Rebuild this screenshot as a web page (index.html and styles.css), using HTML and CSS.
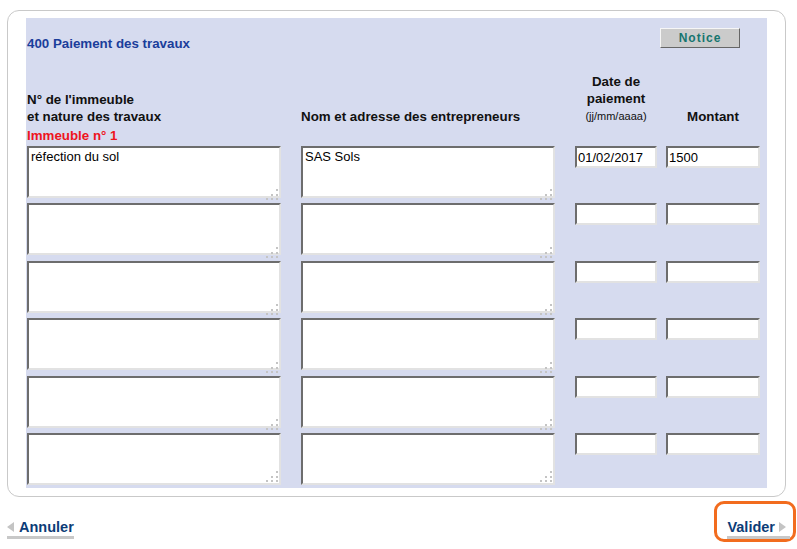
FILE: index.html
```html
<!DOCTYPE html>
<html lang="fr">
<head>
  <meta charset="UTF-8">
  <title>Paiement des travaux</title>
  <link rel="stylesheet" href="styles.css">
</head>
<body>
  <div class="panel">
    <div class="sheet">
      <div class="topbar">
        <h2 class="title">400 Paiement des travaux</h2>
        <button class="notice">Notice</button>
      </div>

      <div class="grid">
        <div class="head c1">N° de l'immeuble<br>et nature des travaux</div>
        <div class="head c2">Nom et adresse des entrepreneurs</div>
        <div class="head c3 center">Date de<br>paiement<br><small>(jj/mm/aaaa)</small></div>
        <div class="head c4 center">Montant</div>

        <div class="building">Immeuble n° 1</div>

        <div class="c1 area"><textarea>réfection du sol</textarea></div>
        <div class="c2 area"><textarea>SAS Sols</textarea></div>
        <div class="c3"><input type="text" value="01/02/2017"></div>
        <div class="c4"><input type="text" value="1500"></div>

        <div class="c1 area"><textarea></textarea></div>
        <div class="c2 area"><textarea></textarea></div>
        <div class="c3"><input type="text"></div>
        <div class="c4"><input type="text"></div>

        <div class="c1 area"><textarea></textarea></div>
        <div class="c2 area"><textarea></textarea></div>
        <div class="c3"><input type="text"></div>
        <div class="c4"><input type="text"></div>

        <div class="c1 area"><textarea></textarea></div>
        <div class="c2 area"><textarea></textarea></div>
        <div class="c3"><input type="text"></div>
        <div class="c4"><input type="text"></div>

        <div class="c1 area"><textarea></textarea></div>
        <div class="c2 area"><textarea></textarea></div>
        <div class="c3"><input type="text"></div>
        <div class="c4"><input type="text"></div>

        <div class="c1 area"><textarea></textarea></div>
        <div class="c2 area"><textarea></textarea></div>
        <div class="c3"><input type="text"></div>
        <div class="c4"><input type="text"></div>
      </div>
    </div>
  </div>

  <div class="actions">
    <a href="#" class="nav-link back"><span class="arrow-left"></span>Annuler</a>
    <span class="focus-box">
      <a href="#" class="nav-link next">Valider<span class="arrow-right"></span></a>
    </span>
  </div>
</body>
</html>
```

FILE: styles.css
```css
body { margin: 0; font-family: "Liberation Sans", Arial, sans-serif; color: #111; background: #fff; }

.panel { box-sizing: border-box; width: 779px; margin: 10px 0 0 7px; padding: 7px 18px 8px 18px; border: 1px solid #c9c9c9; border-radius: 12px; }
.sheet { background: #d6dbef; padding: 10px 7px 3px 1px; }

.topbar { display: flex; justify-content: space-between; align-items: flex-start; width: 733px; height: 20px; }
.title { margin: 0; padding-top: 7px; font-size: 13.33px; line-height: 17px; color: #1b3e9b; }
.notice { width: 80px; height: 20px; margin-right: 20px; padding: 0; background: #cbcbcb; border: 1px solid; border-color: #f6f6f6 #666 #666 #f6f6f6; color: #16756f; font: bold 12px "Liberation Sans", Arial, sans-serif; letter-spacing: 1px; }

.grid { display: grid; margin-top: 25px; grid-template-columns: 254px 274px 102px 103px; grid-template-rows: auto 21px repeat(5, 57.4px) 52px; }
.c2, .c3 { margin-left: 20px; }
.c4 { margin-left: 9px; }

.head { align-self: end; font-size: 13.33px; font-weight: bold; line-height: 17px; }
.head small { font-size: 11px; font-weight: normal; }
.center { text-align: center; }
.building { grid-column: 1 / -1; padding-top: 2px; font-size: 13.33px; font-weight: bold; line-height: 17px; color: #ee1420; }

.area { position: relative; }
.area::after { content: ""; position: absolute; right: 3px; bottom: 3px; width: 2px; height: 2px; background: #c4c4c4; box-shadow: -5px 0 #c4c4c4, -10px 0 #c4c4c4, 0 -4px #c4c4c4, -5px -4px #c4c4c4, 0 -9px #c4c4c4; }

textarea, input { display: block; box-sizing: border-box; width: 100%; margin: 0; background: #fff; color: #000; border: 2px solid; border-color: #6d6d6d #e2e2e2 #e2e2e2 #6d6d6d; font: 13px "Liberation Sans", Arial, sans-serif; outline: none; }
textarea { height: 52px; padding: 1px 2px; resize: none; overflow: hidden; }
input { height: 22px; padding: 0 1px; }

.actions { display: flex; justify-content: space-between; align-items: flex-end; width: 789px; margin: 4px 0 0 7px; }
.nav-link { display: inline-flex; align-items: center; border-bottom: 3px solid #c8c8c8; color: #0c3c77; font-size: 14.5px; font-weight: bold; line-height: 18px; text-decoration: none; }
.back { margin-bottom: 3px; }
.next { padding-right: 4px; }
.arrow-left { width: 0; height: 0; margin-right: 5px; border-top: 5px solid transparent; border-bottom: 5px solid transparent; border-right: 7px solid #c4c4c4; }
.arrow-right { width: 0; height: 0; margin-left: 4px; border-top: 5px solid transparent; border-bottom: 5px solid transparent; border-left: 7px solid #c4c4c4; }
.focus-box { display: inline-block; padding: 14px 3px 0 10px; border: 3px solid #f26c1e; border-radius: 10px; }
```
